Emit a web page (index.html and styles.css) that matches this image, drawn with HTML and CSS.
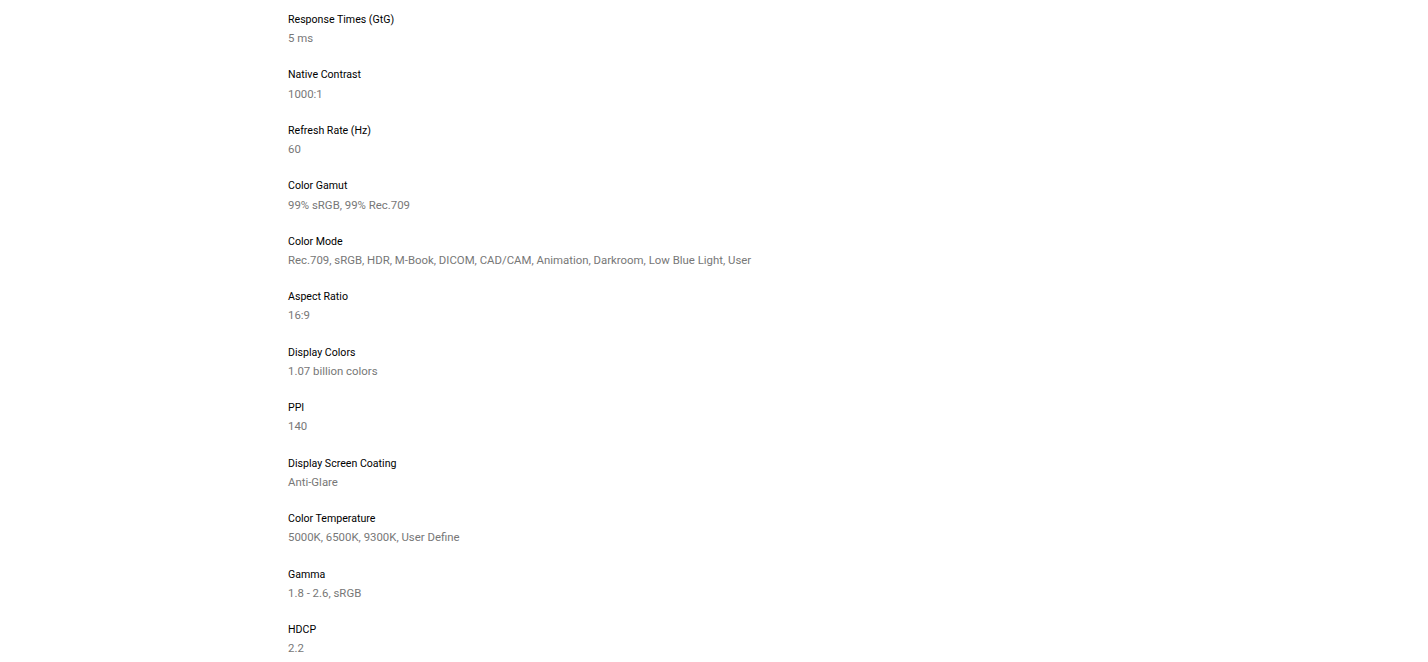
FILE: index.html
```html
<!DOCTYPE html>
<html lang="en">
  <head>
    <meta charset="UTF-8" />
    <title>Specifications</title>
    <link rel="stylesheet" href="styles.css">
  </head>
  <body>
    <div class="spec-list">
      <div class="spec-item">
        <div class="spec-label">Response Times (GtG)</div>
        <div class="spec-value">5 ms</div>
      </div>
      <div class="spec-item">
        <div class="spec-label">Native Contrast</div>
        <div class="spec-value">1000:1</div>
      </div>
      <div class="spec-item">
        <div class="spec-label">Refresh Rate (Hz)</div>
        <div class="spec-value">60</div>
      </div>
      <div class="spec-item">
        <div class="spec-label">Color Gamut</div>
        <div class="spec-value">99% sRGB, 99% Rec.709</div>
      </div>
      <div class="spec-item">
        <div class="spec-label">Color Mode</div>
        <div class="spec-value">Rec.709, sRGB, HDR, M-Book, DICOM, CAD/CAM, Animation, Darkroom, Low Blue Light, User</div>
      </div>
      <div class="spec-item">
        <div class="spec-label">Aspect Ratio</div>
        <div class="spec-value">16:9</div>
      </div>
      <div class="spec-item">
        <div class="spec-label">Display Colors</div>
        <div class="spec-value">1.07 billion colors</div>
      </div>
      <div class="spec-item">
        <div class="spec-label">PPI</div>
        <div class="spec-value">140</div>
      </div>
      <div class="spec-item">
        <div class="spec-label">Display Screen Coating</div>
        <div class="spec-value">Anti-Glare</div>
      </div>
      <div class="spec-item">
        <div class="spec-label">Color Temperature</div>
        <div class="spec-value">5000K, 6500K, 9300K, User Define</div>
      </div>
      <div class="spec-item">
        <div class="spec-label">Gamma</div>
        <div class="spec-value">1.8 - 2.6, sRGB</div>
      </div>
      <div class="spec-item">
        <div class="spec-label">HDCP</div>
        <div class="spec-value">2.2</div>
      </div>
    </div>
  </body>
</html>
```

FILE: styles.css
```css
body {
  margin: 0;
  padding: 11px 0 0 288px;
  font-family: Roboto, "Liberation Sans", sans-serif;
  background: #fff;
}
.spec-item {
  margin-bottom: 19.05px;
}
.spec-label {
  color: #000;
  font-size: 10.6px;
  line-height: 18.2px;
}
.spec-value {
  color: #777;
  font-size: 11.4px;
  line-height: 18.2px;
}
```
